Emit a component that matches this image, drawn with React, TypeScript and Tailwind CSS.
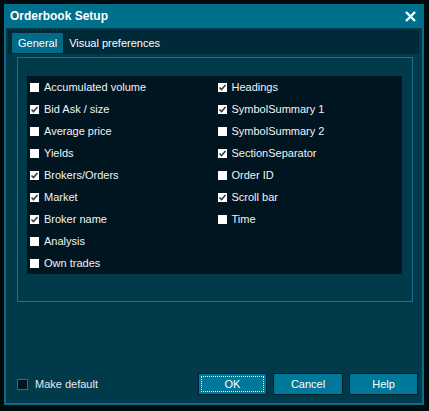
import React from 'react';

const leftItems: [string, boolean][] = [
  ['Accumulated volume', false],
  ['Bid Ask / size', true],
  ['Average price', false],
  ['Yields', false],
  ['Brokers/Orders', true],
  ['Market', true],
  ['Broker name', true],
  ['Analysis', false],
  ['Own trades', false],
];

const rightItems: [string, boolean][] = [
  ['Headings', true],
  ['SymbolSummary 1', true],
  ['SymbolSummary 2', false],
  ['SectionSeparator', true],
  ['Order ID', false],
  ['Scroll bar', true],
  ['Time', false],
];

const Box: React.FC<{ checked: boolean }> = ({ checked }) => (
  <svg width="9" height="9" viewBox="0 0 9 9" className="shrink-0">
    <rect x="0" y="0" width="9" height="9" fill="#ffffff" />
    {checked && (
      <path d="M1.5 4.5 L3.5 6.5 L7.5 2" stroke="#3a3a3a" strokeWidth="1.6" fill="none" />
    )}
  </svg>
);

const Row: React.FC<{ label: string; checked: boolean }> = ({ label, checked }) => (
  <div className="h-[22px] flex items-center gap-[5px] pl-[3px]">
    <Box checked={checked} />
    <span className="text-[11px] text-[#f2f4f5] leading-none">{label}</span>
  </div>
);

export default function App() {
  return (
    <div
      className="w-[429px] h-[411px] bg-[#00090c] pt-[4px] pl-[4px]"
      style={{ fontFamily: '"Liberation Sans", Arial, sans-serif' }}
    >
      <div className="w-[420px] h-[401px] flex flex-col">
        {/* title bar */}
        <div className="h-[24px] bg-[#006f8c] flex items-center justify-between pl-[6px] pr-[8px] shrink-0">
          <span className="text-[12px] font-bold text-white">Orderbook Setup</span>
          <svg width="11" height="11" viewBox="0 0 11 11">
            <path d="M1 1 L10 10 M10 1 L1 10" stroke="#ffffff" strokeWidth="2.4" />
          </svg>
        </div>

        <div className="flex-1 flex flex-col bg-[#003a4b] border-x-2 border-b-2 border-[#0b6d89]">
          {/* tabs */}
          <div className="mt-[2px] ml-[2px] mr-[3px] h-[24px] bg-[#002a37] flex items-start pl-[4px] pt-[3px]">
            <div className="h-[20px] px-[6px] bg-[#006a87] flex items-center text-[11px] text-white">
              General
            </div>
            <div className="h-[20px] px-[6px] flex items-center text-[11px] text-white">
              Visual preferences
            </div>
          </div>

          {/* group box */}
          <div className="mt-[3px] ml-[11px] w-[396px] h-[245px] border border-[#17738e] pt-[18px] pl-[9px]">
            <div className="w-[375px] h-[198px] bg-[#00151f] grid grid-cols-2">
              <div className="flex flex-col">
                {leftItems.map(([l, c]) => (
                  <Row key={l} label={l} checked={c} />
                ))}
              </div>
              <div className="flex flex-col">
                {rightItems.map(([l, c]) => (
                  <Row key={l} label={l} checked={c} />
                ))}
              </div>
            </div>
          </div>

          {/* bottom row */}
          <div className="mt-auto flex items-center justify-between pl-[11px] pr-[4px] pb-[8px]">
            <div className="flex items-center gap-[7px]">
              <div className="w-[11px] h-[11px] bg-[#00161f] border border-[#2b6f84]" />
              <span className="text-[11px] text-[#e6ecee]">Make default</span>
            </div>
            <div className="flex gap-[6px]">
              <button className="w-[69px] h-[22px] bg-[#007899] border border-[#001f29] p-[2px]">
                <div className="w-full h-full border border-dotted border-white flex items-center justify-center text-[11px] text-white">
                  OK
                </div>
              </button>
              <button className="w-[70px] h-[22px] bg-[#007899] border border-[#001f29] flex items-center justify-center text-[11px] text-white">
                Cancel
              </button>
              <button className="w-[69px] h-[22px] bg-[#007899] border border-[#001f29] flex items-center justify-center text-[11px] text-white">
                Help
              </button>
            </div>
          </div>
        </div>
      </div>
    </div>
  );
}
